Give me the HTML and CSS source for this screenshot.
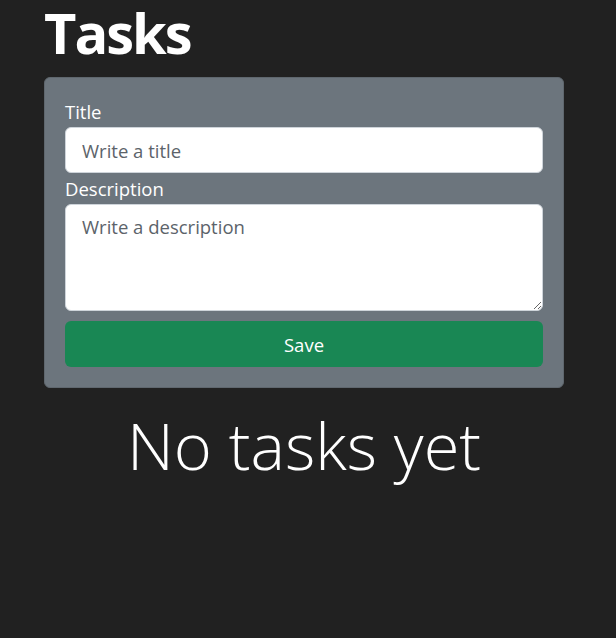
FILE: index.html
```html
<!DOCTYPE html>
<html lang="en">
<head>
<meta charset="utf-8">
<title>Tasks</title>
<link rel="stylesheet" href="styles.css">
</head>
<body>
<main class="page">
  <h1 class="title">Tasks</h1>
  <form class="card">
    <label class="label" for="title">Title</label>
    <input class="field" id="title" type="text" placeholder="Write a title">
    <label class="label" for="desc">Description</label>
    <textarea class="field area" id="desc" placeholder="Write a description"></textarea>
    <button class="save" type="button">Save</button>
  </form>
  <p class="empty">No tasks yet</p>
</main>
</body>
</html>
```
FILE: styles.css
```css
html, body {
  margin: 0;
  padding: 0;
  background: #212121;
  height: 100%;
}
body {
  font-family: "Open Sans", "Noto Sans", sans-serif;
  color: #fff;
}
.page {
  width: 520px;
  margin-left: 44px;
  display: flex;
  flex-direction: column;
}
.title {
  margin: 0;
  font-size: 56px;
  font-weight: 700;
  line-height: 64px;
  letter-spacing: -2px;
  height: 77px;
}
.card {
  background: #6c757d;
  border: 1px solid #5f676e;
  border-radius: 6px;
  padding: 20px;
  display: flex;
  flex-direction: column;
}
.label {
  font-size: 18.5px;
  line-height: 27px;
  margin: 2px 0;
}
.label:first-child {
  margin-top: 0;
}
.field {
  box-sizing: border-box;
  width: 100%;
  height: 46px;
  margin: 0;
  padding: 8px 16px;
  border: 1px solid #ced4da;
  border-radius: 6px;
  background: #fff;
  font-family: inherit;
  font-size: 18.5px;
  line-height: 27px;
  color: #212529;
  outline: none;
}
.field::placeholder {
  color: #5c636a;
}
.area {
  height: 107px;
  resize: vertical;
}
.save {
  margin-top: 10px;
  height: 46px;
  border: 0;
  border-radius: 6px;
  background: #198754;
  color: #fff;
  font-family: inherit;
  font-size: 18.5px;
}
.empty {
  margin: 18px 0 0;
  text-align: center;
  font-size: 65px;
  font-weight: 300;
  line-height: 78px;
}
```
